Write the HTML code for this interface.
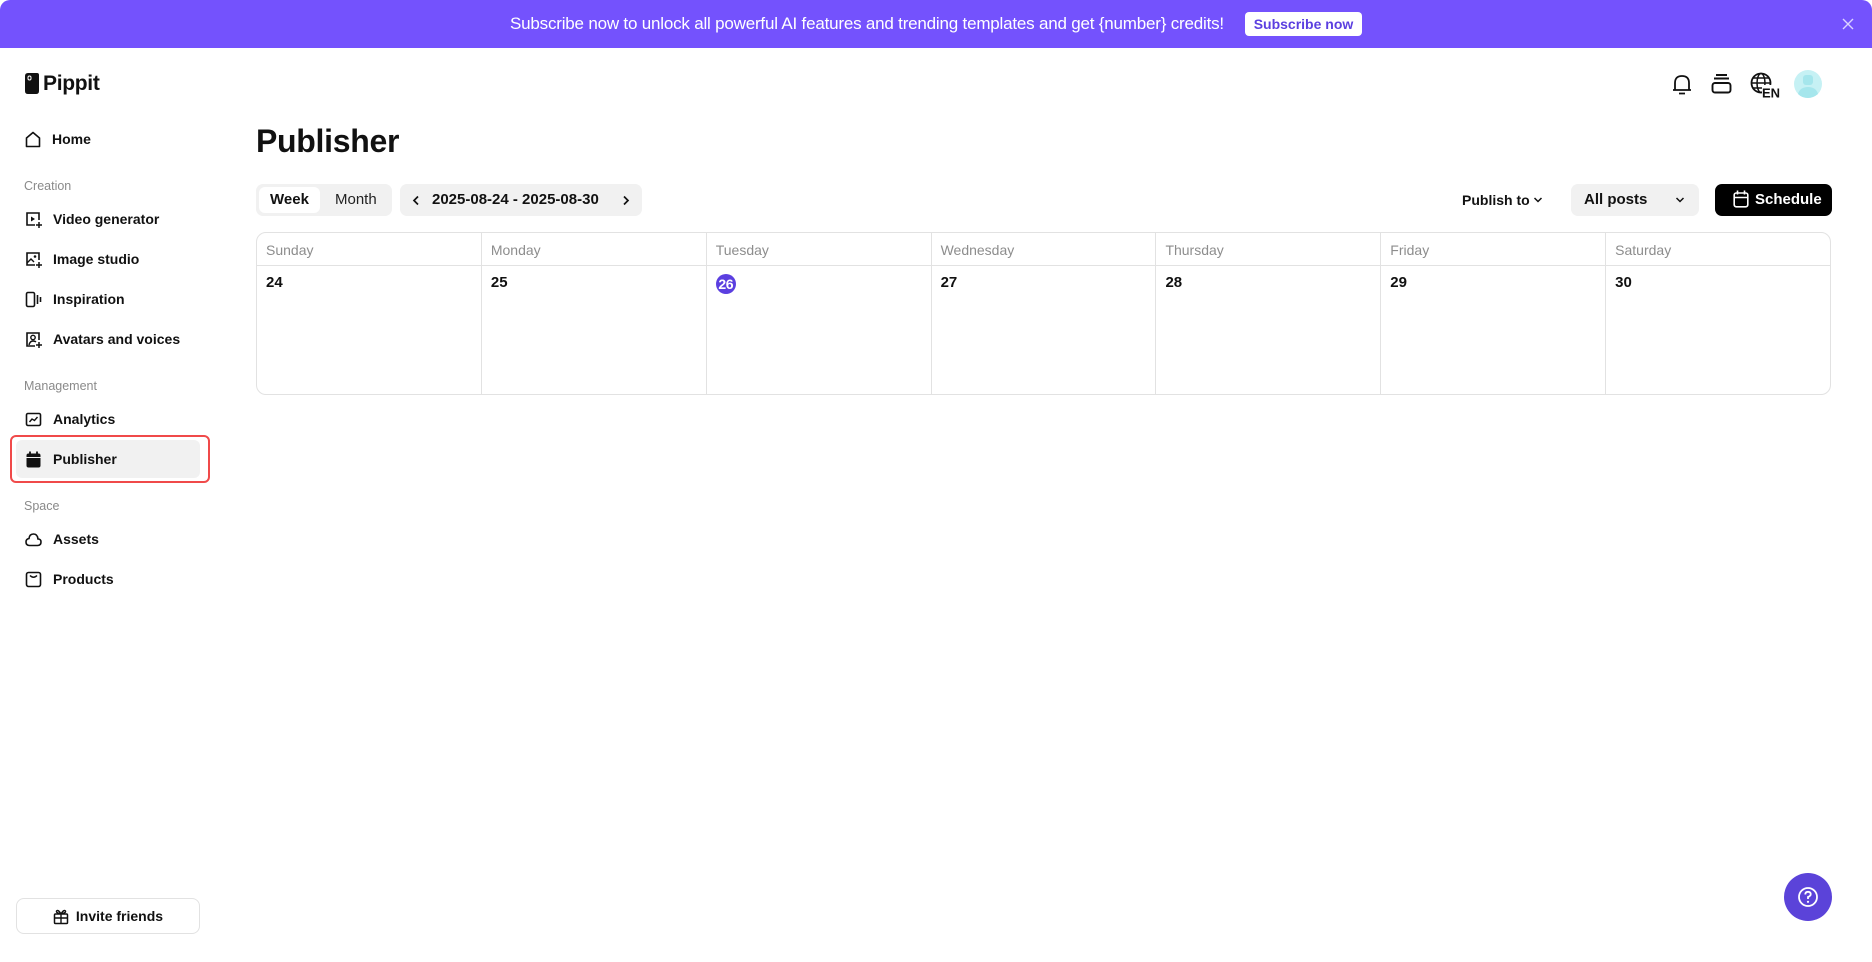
<!DOCTYPE html>
<html><head><meta charset="utf-8"><style>
*{box-sizing:border-box;margin:0;padding:0}
body{width:1872px;height:962px;background:#fff;font-family:"Liberation Sans",sans-serif;color:#111;position:relative;overflow:hidden}
.abs{position:absolute}
.banner{left:0;top:0;width:1872px;height:48px;background:#7452fd;border-radius:10px 10px 0 0}
.btext{left:510px;top:14px;font-size:17px;color:#fff;letter-spacing:-0.2px;white-space:nowrap}
.bbtn{left:1245px;top:12px;width:117px;height:24px;background:#fff;border-radius:4px;color:#5b3fe0;font-size:14px;font-weight:700;text-align:center;line-height:24px}
.nav{left:25px;display:flex;align-items:center;font-size:14px;font-weight:700;color:#111;height:20px}
.nav svg{margin-right:11px}
.lbl{left:24px;font-size:12.5px;color:#8a8a8a}
.seg{background:#f1f1f1;border-radius:7px;height:32px}
.cal{left:256px;top:232px;width:1575px;height:163px;border:1px solid #e2e2e2;border-radius:10px;display:flex;overflow:hidden}
.col{flex:1;border-right:1px solid #e2e2e2}
.col:last-child{border-right:none}
.hd{height:33px;border-bottom:1px solid #e2e2e2;font-size:14px;color:#8d8d8d;padding:9px 0 0 9px}
.dn{font-size:15px;font-weight:700;padding:8px 0 0 9px}
</style></head><body>
<div class="abs banner"></div>
<div class="abs btext">Subscribe now to unlock all powerful AI features and trending templates and get {number} credits!</div>
<div class="abs bbtn">Subscribe now</div>
<svg class="abs" style="left:1841px;top:17px" width="14" height="14" viewBox="0 0 14 14"><path d="M2 2L12 12M12 2L2 12" stroke="#dcd3ff" stroke-width="1.4"/></svg>

<svg class="abs" style="left:25px;top:73px" width="14" height="21" viewBox="0 0 14 21"><path d="M3 0H12Q14 0 14 2V18Q14 21 11 21H3Q0 21 0 18V3Q0 0 3 0Z" fill="#111"/><rect x="3" y="3" width="3" height="4" rx="1.5" fill="none" stroke="#fff" stroke-width="1"/></svg>
<div class="abs" style="left:43px;top:72px;font-size:21px;font-weight:700;letter-spacing:-0.3px">Pippit</div>

<div class="abs nav" style="top:129px"><svg width="16" height="17" viewBox="0 0 16 17"><path d="M1.5 7L8 1.5L14.5 7V15.5H1.5Z" fill="none" stroke="#111" stroke-width="1.6" stroke-linejoin="round"/></svg><span>Home</span></div>
<div class="abs lbl" style="top:179px">Creation</div>
<div class="abs nav" style="top:209px"><svg width="17" height="17" viewBox="0 0 17 17"><path d="M10 14H2V2H14V9" fill="none" stroke="#111" stroke-width="1.6"/><path d="M6 5.5V10.5L10 8Z" fill="#111"/><path d="M14 11V17M11 14H17" stroke="#111" stroke-width="1.5"/></svg>Video generator</div>
<div class="abs nav" style="top:249px"><svg width="17" height="17" viewBox="0 0 17 17"><path d="M10 14H2V2H14V9" fill="none" stroke="#111" stroke-width="1.6"/><path d="M2 12L6 8L9 11" fill="none" stroke="#111" stroke-width="1.4"/><circle cx="10" cy="5.5" r="1.3" fill="#111"/><path d="M14 11V17M11 14H17" stroke="#111" stroke-width="1.5"/></svg>Image studio</div>
<div class="abs nav" style="top:289px"><svg width="17" height="17" viewBox="0 0 17 17"><rect x="1.5" y="1.5" width="8" height="14" rx="1.5" fill="none" stroke="#111" stroke-width="1.6"/><path d="M12.5 4V13M15.5 6V11" stroke="#111" stroke-width="1.6"/></svg>Inspiration</div>
<div class="abs nav" style="top:329px"><svg width="17" height="17" viewBox="0 0 17 17"><path d="M10 15H2V2H14V9" fill="none" stroke="#111" stroke-width="1.6"/><circle cx="8" cy="6.5" r="2.2" fill="none" stroke="#111" stroke-width="1.4"/><path d="M4 14Q5 10 8 10Q10 10 11 11" fill="none" stroke="#111" stroke-width="1.4"/><path d="M14 11V17M11 14H17" stroke="#111" stroke-width="1.5"/></svg>Avatars and voices</div>
<div class="abs lbl" style="top:379px">Management</div>
<div class="abs nav" style="top:409px"><svg width="17" height="17" viewBox="0 0 17 17"><rect x="1.5" y="2.5" width="14" height="12" rx="1.5" fill="none" stroke="#111" stroke-width="1.6"/><path d="M4.5 11L7 8L9.5 9.5L12.5 6" fill="none" stroke="#111" stroke-width="1.4"/></svg>Analytics</div>
<div class="abs" style="left:10px;top:435px;width:200px;height:48px;border:2.5px solid #f04a4a;border-radius:6px"></div>
<div class="abs" style="left:16px;top:440px;width:184px;height:38px;background:#f1f1f1;border-radius:6px"></div>
<div class="abs nav" style="top:449px"><svg width="17" height="17" viewBox="0 0 17 17"><rect x="1.5" y="2.5" width="14" height="14" rx="2" fill="#111"/><path d="M5 0.5V4M12 0.5V4" stroke="#111" stroke-width="1.8"/><path d="M1.5 6.5H15.5" stroke="#f1f1f1" stroke-width="1"/></svg>Publisher</div>
<div class="abs lbl" style="top:499px">Space</div>
<div class="abs nav" style="top:529px"><svg width="17" height="17" viewBox="0 0 17 17"><path d="M4.5 14.5H12.5Q16 14.5 16 11Q16 8 13 8Q12.5 3 8.5 3Q4.5 3 4 7.5Q1 8 1 11Q1 14.5 4.5 14.5Z" fill="none" stroke="#111" stroke-width="1.6"/></svg>Assets</div>
<div class="abs nav" style="top:569px"><svg width="17" height="17" viewBox="0 0 17 17"><rect x="1.5" y="1.5" width="14" height="14" rx="2" fill="none" stroke="#111" stroke-width="1.6"/><path d="M5 4.5Q8.5 8 12 4.5" fill="none" stroke="#111" stroke-width="1.5"/></svg>Products</div>

<div class="abs" style="left:16px;top:898px;width:184px;height:36px;border:1px solid #e2e2e2;border-radius:8px;display:flex;align-items:center;justify-content:center;font-size:14px;font-weight:700"><svg width="16" height="17" viewBox="0 0 16 17" style="margin-right:7px"><rect x="1.5" y="6" width="13" height="9.5" rx="1" fill="none" stroke="#111" stroke-width="1.5"/><path d="M1.5 10H14.5M8 6V15.5M8 6Q5 1 3.5 3Q3 5 8 6Q13 5 12.5 3Q11 1 8 6" fill="none" stroke="#111" stroke-width="1.4"/></svg>Invite friends</div>

<svg class="abs" style="left:1671px;top:73px" width="22" height="22" viewBox="0 0 22 22"><path d="M4 17V10Q4 3 11 3Q18 3 18 10V17ZM2 17H20M8 20.5H14" fill="none" stroke="#111" stroke-width="1.8"/></svg>
<svg class="abs" style="left:1711px;top:74px" width="21" height="20" viewBox="0 0 21 20"><rect x="1.5" y="9" width="18" height="9.5" rx="2.5" fill="none" stroke="#111" stroke-width="1.9"/><path d="M3 4.5H18M5 1H16" stroke="#111" stroke-width="1.9"/></svg>
<svg class="abs" style="left:1750px;top:72px" width="32" height="26" viewBox="0 0 32 26"><circle cx="11" cy="11" r="9.5" fill="none" stroke="#111" stroke-width="1.8"/><ellipse cx="11" cy="11" rx="4" ry="9.5" fill="none" stroke="#111" stroke-width="1.5"/><path d="M1.5 11H20.5M3 6H19M3 16H13" stroke="#111" stroke-width="1.5"/><rect x="12" y="13" width="20" height="13" fill="#fff"/><text x="12" y="25.5" font-family="Liberation Sans" font-weight="700" font-size="13" fill="#111">EN</text></svg>
<svg class="abs" style="left:1794px;top:70px" width="28" height="28" viewBox="0 0 28 28"><circle cx="14" cy="14" r="14" fill="#c6f1f4"/><rect x="9" y="5" width="10" height="10" rx="3" fill="#a5e6ec"/><path d="M4 24Q6 17 14 17Q22 17 24 24Q19 28 14 28Q8 28 4 24Z" fill="#a5e6ec"/></svg>

<div class="abs" style="left:256px;top:123px;font-size:32px;font-weight:700;letter-spacing:-0.3px">Publisher</div>

<div class="abs seg" style="left:256px;top:184px;width:136px"></div>
<div class="abs" style="left:259px;top:187px;width:61px;height:26px;background:#fff;border-radius:6px;font-size:15px;font-weight:700;text-align:center;line-height:26px">Week</div>
<div class="abs" style="left:335px;top:187px;font-size:15px;line-height:26px;color:#222">Month</div>
<div class="abs seg" style="left:400px;top:184px;width:242px"></div>
<svg class="abs" style="left:412px;top:195px" width="8" height="11" viewBox="0 0 8 11"><path d="M6 1.5L2 5.5L6 9.5" fill="none" stroke="#111" stroke-width="1.7"/></svg>
<div class="abs" style="left:432px;top:191px;font-size:15px;font-weight:700">2025-08-24 - 2025-08-30</div>
<svg class="abs" style="left:622px;top:195px" width="8" height="11" viewBox="0 0 8 11"><path d="M2 1.5L6 5.5L2 9.5" fill="none" stroke="#111" stroke-width="1.7"/></svg>

<div class="abs" style="left:1462px;top:192px;font-size:14px;font-weight:700">Publish to</div>
<svg class="abs" style="left:1533px;top:196px" width="10" height="8" viewBox="0 0 10 8"><path d="M1.5 2L5 5.5L8.5 2" fill="none" stroke="#111" stroke-width="1.5"/></svg>
<div class="abs seg" style="left:1571px;top:184px;width:128px"></div>
<div class="abs" style="left:1584px;top:191px;font-size:15px;font-weight:700">All posts</div>
<svg class="abs" style="left:1675px;top:196px" width="10" height="8" viewBox="0 0 10 8"><path d="M1.5 2L5 5.5L8.5 2" fill="none" stroke="#111" stroke-width="1.5"/></svg>
<div class="abs" style="left:1715px;top:184px;width:117px;height:32px;background:#000;border-radius:7px"></div>
<svg class="abs" style="left:1733px;top:190px" width="16" height="18" viewBox="0 0 16 18"><rect x="1.2" y="3" width="13.6" height="13.8" rx="2" fill="none" stroke="#fff" stroke-width="1.6"/><path d="M1.2 7.5H14.8M4.5 0.5V4.5M11.5 0.5V4.5" stroke="#fff" stroke-width="1.6"/></svg>
<div class="abs" style="left:1755px;top:191px;font-size:15px;font-weight:700;color:#fff">Schedule</div>

<div class="abs cal">
<div class="col"><div class="hd">Sunday</div><div class="dn">24</div></div>
<div class="col"><div class="hd">Monday</div><div class="dn">25</div></div>
<div class="col"><div class="hd">Tuesday</div><div class="dn"><span style="display:inline-block;width:20px;height:20px;border-radius:10px;background:#5b3fe0;color:#fff;font-size:14px;text-align:center;line-height:20px;letter-spacing:-0.5px">26</span></div></div>
<div class="col"><div class="hd">Wednesday</div><div class="dn">27</div></div>
<div class="col"><div class="hd">Thursday</div><div class="dn">28</div></div>
<div class="col"><div class="hd">Friday</div><div class="dn">29</div></div>
<div class="col"><div class="hd">Saturday</div><div class="dn">30</div></div>
</div>

<div class="abs" style="left:1784px;top:873px;width:48px;height:48px;border-radius:24px;background:#5b43d9"></div>
<svg class="abs" style="left:1796px;top:885px" width="24" height="24" viewBox="0 0 24 24"><circle cx="12" cy="12" r="9" fill="none" stroke="#fff" stroke-width="1.8"/><path d="M9.3 9.5Q9.3 6.8 12 6.8Q14.7 6.8 14.7 9.3Q14.7 11 12 12V14" fill="none" stroke="#fff" stroke-width="1.8"/><circle cx="12" cy="16.8" r="1.1" fill="#fff"/></svg>
</body></html>
